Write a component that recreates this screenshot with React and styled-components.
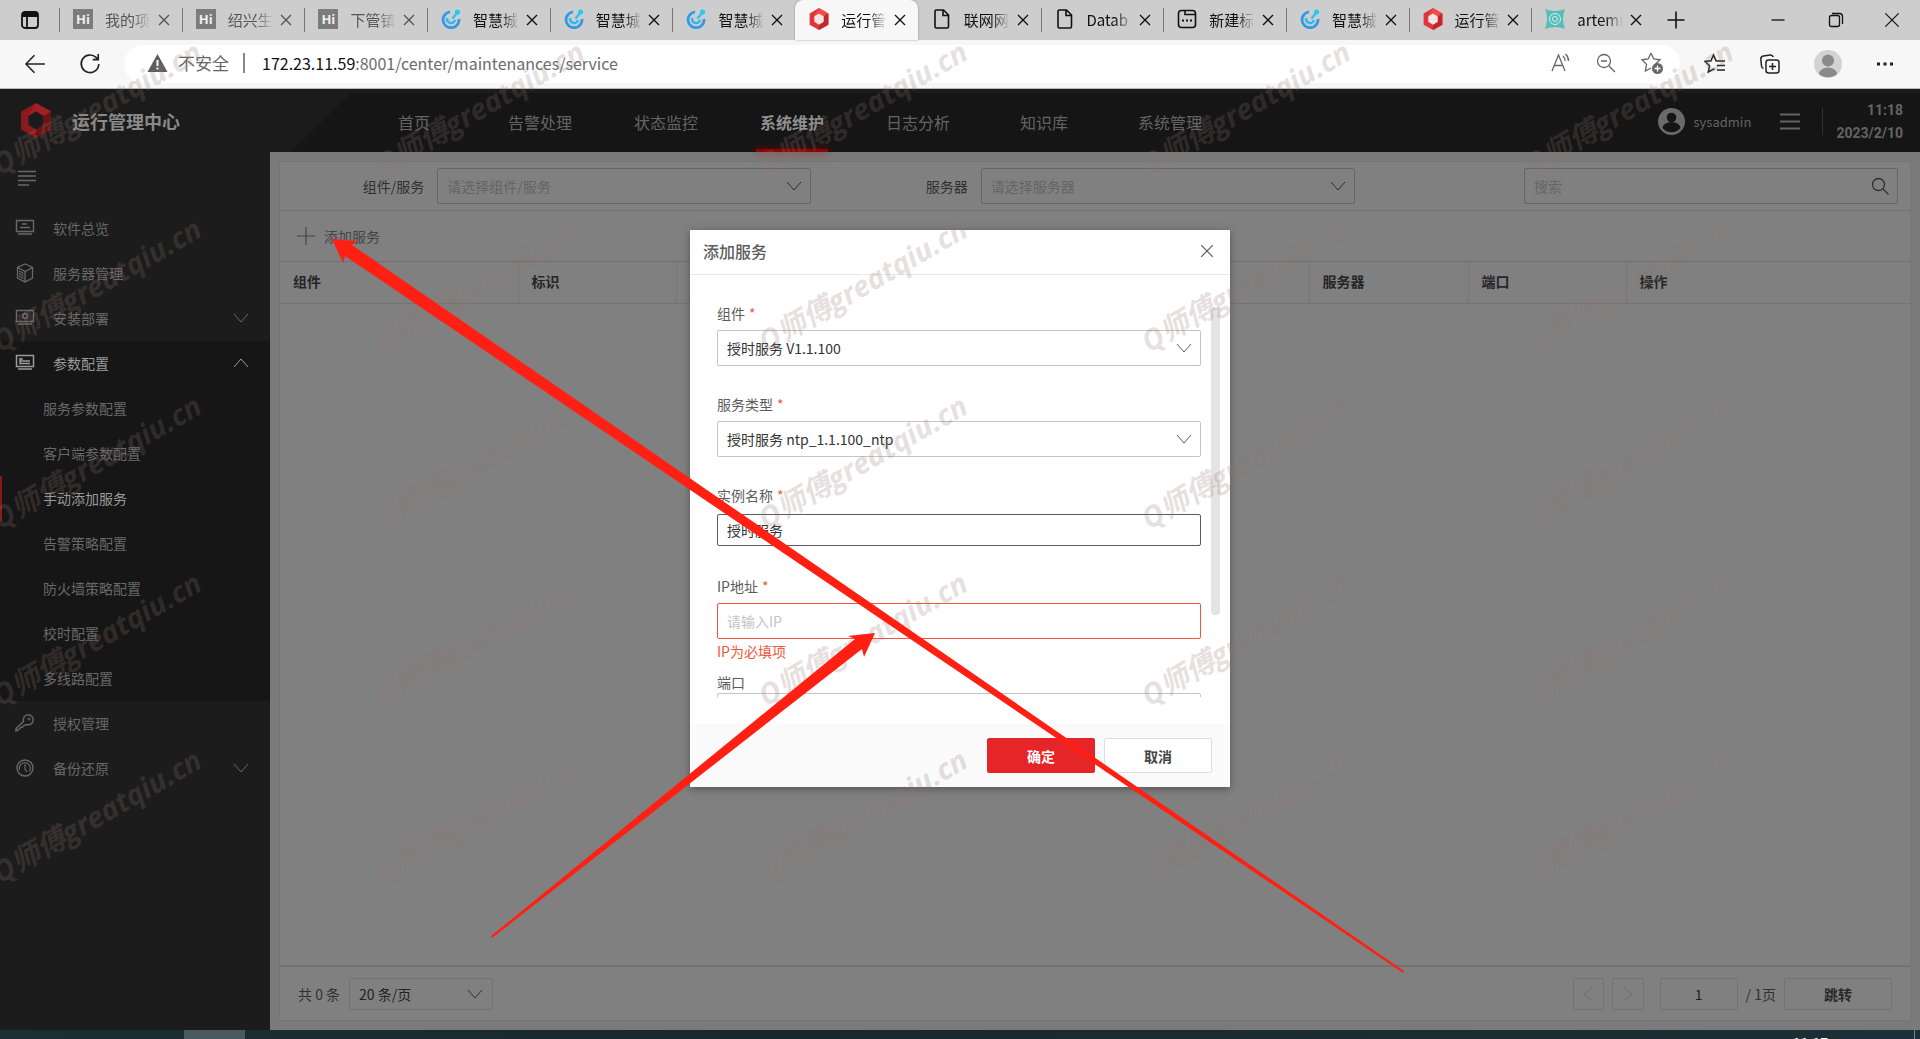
// App.jsx
import React from "react";
import styled, { createGlobalStyle, css } from "styled-components";

const GlobalStyle = createGlobalStyle`
  * {
    box-sizing: border-box;
  }

  body {
    margin: 0;
    font-family: "Noto Sans CJK SC", "Open Sans", sans-serif;
    font-size: 14px;
    overflow: hidden;
  }

  button, input, select {
    font-family: inherit;
    font-size: inherit;
    margin: 0;
  }

  a {
    text-decoration: none;
    color: inherit;
  }
`;

const Screen = styled.div`
  position: relative;
  display: flex;
  flex-direction: column;
  min-height: 100vh;
  overflow: hidden;
`;

const PlainButton = styled.button`
  display: inline-flex;
  align-items: center;
  justify-content: center;
  padding: 0;
  border: 0;
  background: none;
  color: inherit;
`;

/* ---------- browser ---------- */

const TabStrip = styled.div`
  display: flex;
  height: 40px;
  background: #cdcdcd;
  color: #111;
`;

const TabActions = styled(PlainButton)`
  width: 59px;
`;

const TabList = styled.div`
  display: flex;
  flex: 1;
  min-width: 0;
`;

const Tab = styled.div`
  position: relative;
  display: flex;
  flex: 1;
  align-items: center;
  min-width: 0;
  padding: 0 12px 0 14px;
  font-size: 15px;
  color: ${({ $muted }) => ($muted ? "#555" : "#111")};

  &::before {
    content: "";
    position: absolute;
    left: 0;
    top: 8px;
    height: 24px;
    border-left: 1px solid ${({ $plain }) => ($plain ? "transparent" : "#777")};
  }

  ${({ $active }) =>
    $active &&
    css`
      background: #f7f7f7;
      border-radius: 8px 8px 0 0;
      box-shadow: 0 0 2px rgba(0, 0, 0, 0.4);
    `}
`;

const TabTitle = styled.button`
  display: flex;
  flex: 1;
  align-items: center;
  gap: 12px;
  min-width: 0;
  height: 100%;
  padding: 0 0 2px;
  border: 0;
  background: none;
  color: inherit;
  font-size: 15px;

  svg {
    flex: none;
  }
`;

const TabText = styled.span`
  flex: none;
  width: 46px;
  white-space: nowrap;
  text-align: left;
  mask-image: linear-gradient(to right, #000 60%, transparent);
`;

const HiBadge = styled.span`
  flex: none;
  width: 20px;
  height: 20px;
  background: #7b7b7b;
  color: #eee;
  font: bold 13px/20px "Open Sans", sans-serif;
`;

const WindowControls = styled.div`
  display: flex;
  justify-content: space-between;
  width: 266px;
  padding: 0 20px 0 12px;
`;

const WindowGroup = styled.div`
  display: flex;
  gap: 38px;
`;

const AddressRow = styled.div`
  display: flex;
  align-items: center;
  height: 49px;
  padding: 0 24px;
  background: #f7f7f7;
  border-bottom: 1px solid #bbb;
  color: #222;
`;

const NavButtons = styled.div`
  display: flex;
  gap: 33px;
  width: 100px;
`;

const AddressBar = styled.div`
  display: flex;
  align-items: center;
  flex: 1;
  height: 38px;
  padding: 0 16px 2px 23px;
  border-radius: 19px;
  background: #fff;
  color: #666;
  font-size: 17px;
`;

const Unsafe = styled.span`
  margin-left: 10px;
  padding-right: 14px;
  border-right: 2px solid #888;
  line-height: 20px;
`;

const Url = styled.span`
  flex: 1;
  padding-left: 17px;
  font-size: 16px;
  color: #6b6b6b;

  b {
    font-weight: 400;
    color: #111;
  }
`;

const IconGroup = styled.div`
  display: flex;
  align-items: center;
  gap: ${({ $gap }) => $gap}px;
`;

const BrowserIcons = styled(IconGroup)`
  width: 216px;
  padding-left: 24px;
`;

/* ---------- page header ---------- */

const Page = styled.div`
  display: flex;
  flex-direction: column;
  flex: 1;
`;

const Header = styled.header`
  position: relative;
  display: flex;
  height: 63px;
  background: #151515;
  border-top: 4px solid #1c1c1c;
  color: #646464;
`;

const Brand = styled.div`
  display: flex;
  align-items: center;
  gap: 20px;
  width: 351px;
  padding: 0 0 4px 20px;
  background: #1b1b1b;
  clip-path: polygon(0 0, 100% 0, 83% 100%, 0 100%);
  color: #8a8a8a;
  font-size: 18px;
  font-weight: 700;
`;

const MainNav = styled.nav`
  display: flex;
  flex: 1;
`;

const NavLink = styled.a`
  position: relative;
  width: 126px;
  line-height: 58px;
  text-align: center;
  font-size: 16px;

  ${({ $active }) =>
    $active &&
    css`
      color: #909090;
      font-weight: 700;

      &::after {
        content: "";
        position: absolute;
        left: 27px;
        right: 27px;
        bottom: 0;
        height: 3px;
        background: #8a0406;
        box-shadow: 0 0 8px rgba(170, 0, 0, 0.7);
      }
    `}
`;

const UserArea = styled.div`
  display: flex;
  align-items: center;
  padding: 0 17px 2px 0;
`;

const UserName = styled.span`
  padding: 0 29px 0 9px;
  font-size: 13px;
`;

const Clock = styled.div`
  margin-left: 22px;
  padding-left: 14px;
  background: linear-gradient(#333, #333) left center / 1px 27px no-repeat;
  font: bold 14px/23px Roboto, sans-serif;
  text-align: right;
`;

/* ---------- sidebar ---------- */

const Content = styled.div`
  display: flex;
  flex: 1;
`;

const Sidebar = styled.aside`
  width: 270px;
  background: #1c1c1c;
  color: #686868;
`;

const Collapse = styled(PlainButton)`
  width: 100%;
  height: 54px;
  padding: 0 18px 2px;
  justify-content: flex-start;
  align-items: center;
`;

const MenuGroup = styled.div`
  background: ${({ $open }) => ($open ? "#161616" : "transparent")};
`;

const MenuItem = styled.button`
  display: flex;
  align-items: center;
  width: 100%;
  height: 45px;
  padding: 0 21px 2px 15px;
  border: 0;
  background: none;
  color: ${({ $active }) => ($active ? "#9a9a9a" : "inherit")};
  text-align: left;
`;

const MenuText = styled.span`
  flex: 1;
  padding-left: 18px;
`;

const SubLink = styled.a`
  display: block;
  height: 45px;
  padding-left: 41px;
  border-left: 2px solid ${({ $active }) => ($active ? "#8c1719" : "transparent")};
  line-height: 45px;
  color: ${({ $active }) => ($active ? "#9a9a9a" : "inherit")};
`;

/* ---------- service list ---------- */

const Main = styled.main`
  display: flex;
  flex: 1;
  padding: 9px 9px;
  background: #7a7a7a;
`;

const Card = styled.section`
  display: flex;
  flex-direction: column;
  flex: 1;
  background: #808080;
  border: 1px solid #757575;
  color: #303030;
`;

const Filters = styled.div`
  display: grid;
  grid-template-columns: repeat(3, 1fr);
  align-items: center;
  height: 49px;
  border-bottom: 1px solid #707070;
`;

const FilterCell = styled.div`
  display: flex;
  align-items: center;
  justify-content: flex-end;
  gap: 13px;
  padding-right: 12px;
`;

const ControlBox = styled.div`
  position: relative;
  width: ${({ $width }) => $width || "100%"};

  svg {
    position: absolute;
    right: ${({ $inset }) => $inset || 9}px;
    top: 50%;
    transform: translateY(-50%);
    pointer-events: none;
  }
`;

const control = css`
  display: block;
  width: 100%;
  height: ${({ $height }) => $height || 36}px;
  padding: 0 9px;
  border: 1px solid ${({ $line }) => $line || "#666"};
  border-radius: 2px;
  outline: none;
  background: transparent;
  color: ${({ $ink }) => $ink || "#646464"};
  text-align: ${({ $align }) => $align || "left"};

  &::placeholder {
    color: ${({ $hint }) => $hint || "#666"};
    opacity: 1;
  }
`;

const Select = styled.select`
  ${control}
  appearance: none;
`;

const Input = styled.input`
  ${control}
`;

const Toolbar = styled.div`
  display: flex;
  align-items: center;
  height: 51px;
  padding-left: 17px;
  border-bottom: 1px solid #707070;
`;

const AddButton = styled(PlainButton)`
  gap: 9px;
  color: #454545;
`;

const Table = styled.table`
  width: 100%;
  border-collapse: collapse;
  table-layout: fixed;
`;

const Th = styled.th`
  width: ${({ $width }) => $width};
  height: 41px;
  padding: 0 0 2px 13px;
  border-bottom: 1px solid #737373;
  border-right: 1px solid #767676;
  text-align: left;
  font-weight: 700;
  color: #262626;

  &:last-child {
    border-right: 0;
  }
`;

const Pager = styled.div`
  display: flex;
  align-items: center;
  height: 55px;
  margin-top: auto;
  padding: 0 18px;
  border-top: 2px solid #727272;
`;

const Total = styled.span`
  width: 51px;
  white-space: nowrap;
`;

const PagerRight = styled.div`
  display: flex;
  align-items: center;
  gap: 8px;
  margin-left: auto;
`;

const OutlineButton = styled.button`
  display: inline-flex;
  align-items: center;
  justify-content: center;
  width: ${({ $width }) => $width}px;
  height: 32px;
  padding: 0;
  border: 1px solid #727272;
  border-radius: 2px;
  background: transparent;
  color: ${({ $faint }) => ($faint ? "#6c6c6c" : "#2a2a2a")};
  font-weight: 700;
`;

const PageBox = styled.div`
  width: 78px;
  margin-left: 8px;
`;

/* ---------- dialog ---------- */

const Overlay = styled.div`
  position: absolute;
  inset: 230px 0 auto;
  display: flex;
  justify-content: center;
`;

const Dialog = styled.section`
  width: 540px;
  background: #fff;
  box-shadow: 0 2px 8px rgba(0, 0, 0, 0.35);
  color: #5c5c5c;
`;

const DialogHead = styled.div`
  display: flex;
  align-items: center;
  justify-content: space-between;
  height: 45px;
  padding: 0 16px 2px 13px;
  border-bottom: 1px solid #e8e8e8;
`;

const DialogTitle = styled.h2`
  margin: 0;
  font-size: 16px;
  font-weight: 500;
`;

const DialogBody = styled.div`
  position: relative;
  height: 422px;
  margin-bottom: 27px;
  padding: 27px 29px 0 27px;
  overflow: hidden;
`;

const ScrollThumb = styled.div`
  position: absolute;
  right: 10px;
  top: 32px;
  width: 9px;
  height: 308px;
  border-radius: 4px;
  background: #e4e4e4;
`;

const Field = styled.div`
  min-height: ${({ $tight }) => ($tight ? 0 : 91)}px;
`;

const Label = styled.label`
  display: block;
  height: ${({ $tight }) => ($tight ? 20 : 28)}px;
  line-height: ${({ $tight }) => ($tight ? 18 : 22)}px;

  i {
    margin-left: 4px;
    color: #f0583e;
    font-style: normal;
  }
`;

const Centered = styled.div`
  display: flex;
  align-items: center;
  height: 36px;
`;

const ErrorText = styled.div`
  height: 34px;
  line-height: 24px;
  color: #f0583e;
`;

const DialogFoot = styled.div`
  display: flex;
  justify-content: flex-end;
  gap: 9px;
  padding: 14px 18px;
  background: #fafafa;
`;

const DialogButton = styled.button`
  width: 108px;
  height: 35px;
  border: 1px solid ${({ $primary }) => ($primary ? "#e62529" : "#dedede")};
  border-radius: 2px;
  background: ${({ $primary }) => ($primary ? "#e62529" : "#fff")};
  color: ${({ $primary }) => ($primary ? "#fff" : "#444")};
  font-weight: 700;
`;

/* ---------- taskbar and overlays ---------- */

const Taskbar = styled.footer`
  display: flex;
  justify-content: space-between;
  height: 9px;
  padding: 0 5px 0 184px;
  overflow: hidden;
  background: linear-gradient(to right, #1b2f35, #19282d 40%, #1c2f36);
`;

const RunningApp = styled.div`
  width: 61px;
  background: #4a595f;
`;

const TaskClock = styled.div`
  height: 9px;
  padding: 2px 86px 0 0;
  border-right: 1px solid #77858a;
  color: #fff;
  font-size: 14px;
  line-height: 20px;
`;

const Layer = styled.svg`
  position: absolute;
  left: 0;
  top: 0;
  pointer-events: none;
`;

const Mark = styled.text`
  font: italic 700 29px "Open Sans", "Noto Sans CJK SC", sans-serif;
  fill: #8f7571;
  fill-opacity: 0.24;
`;

/* ---------- icons ---------- */

function Icon({ size = 20, box = 20, stroke = 1, children }) {
  return (
    <svg
      width={size}
      height={size}
      viewBox={`0 0 ${box} ${box}`}
      fill="none"
      stroke="currentColor"
      strokeWidth={stroke}
    >
      {children}
    </svg>
  );
}

const Chevron = ({ up, size = 16 }) => (
  <Icon size={size} box={16}>
    <path d={up ? "M1 12l7-8 7 8" : "M1 4l7 8 7-8"} />
  </Icon>
);

const Cross = ({ size = 12, stroke = 1 }) => (
  <Icon size={size} box={12} stroke={stroke}>
    <path d="M1 1l10 10M11 1L1 11" />
  </Icon>
);

const Swirl = () => (
  <svg width="20" height="20" viewBox="0 0 20 20" fill="none">
    <path d="M9 2.800A8 8 0 1 0 18 10" stroke="#2e9be8" strokeWidth="2.800" />
    <path d="M6.200 9a4 4 0 1 0 7.800 2" stroke="#28b7ee" strokeWidth="2.400" />
    <path d="M11.500 9.500l4.500-5.500" stroke="#29c4f2" strokeWidth="2.500" />
    <circle cx="16.500" cy="3" r="2.600" fill="#29c9f3" />
  </svg>
);

const HexLogo = ({ width = 20, dim }) => (
  <svg width={width} height={width * 1.1} viewBox="0 0 32 35">
    <path d="M16 0l15 8.500v18L16 35 1 26.500v-18z" fill={dim ? "#8a1a1d" : "#e0353a"} />
    <path d="M16 0l15 8.500-7 4.500-8-5-8 5z" fill={dim ? "#a02024" : "#f04a4c"} />
    <path d="M31 8.500v18L16 35l0-8 8-5V13z" fill={dim ? "#6c1316" : "#c4262c"} />
    <path
      d="M16 8.500l7.500 4.500v9L16 26.500 8.500 22v-9z"
      fill={dim ? "#1b1b1b" : "#f3e4e4"}
    />
  </svg>
);

const PageIcon = () => (
  <Icon stroke={1.6}>
    <path d="M4.500 1h7l5 5v11.500a1.500 1.500 0 0 1-1.500 1.500H4.500A1.500 1.500 0 0 1 3 17.500v-15A1.500 1.500 0 0 1 4.500 1zM11 1v5.500h5.500" />
  </Icon>
);

const NewTabIcon = () => (
  <Icon stroke={1.6}>
    <rect x="1.500" y="1.500" width="17" height="17" rx="3" />
    <path d="M8 1.500v4h10.500" />
    <path d="M5 11.500h2M9 11.500h2M13 11.500h2" strokeWidth="2" />
  </Icon>
);

const TealIcon = () => (
  <svg width="20" height="20" viewBox="0 0 20 20" fill="none" stroke="#d6efec">
    <path d="M0 0q10 4 20 0-4 10 0 20-10-4-20 0 4-10 0-20z" fill="#58bcb8" stroke="none" />
    <circle cx="10" cy="10" r="5.500" />
    <circle cx="10" cy="10" r="2.500" />
  </svg>
);

const tabIcons = {
  hi: <HiBadge>Hi</HiBadge>,
  swirl: <Swirl />,
  hex: <HexLogo width={20} />,
  page: <PageIcon />,
  blank: <NewTabIcon />,
  teal: <TealIcon />,
};

const menuIcons = {
  overview: (
    <Icon>
      <path d="M1.500 2.500h17v11h-17zM3 16h14M7 6h5M5 9.500h10" strokeWidth="1.400" />
    </Icon>
  ),
  server: (
    <Icon>
      <path d="M10 1l7.500 3.500v10.500L10 19l-7.500-4V4.500zM2.500 4.500L10 8.500l7.500-4M10 8.500V19M4 8l4.500 2.500M4 10.500L8.500 13M4 13l4.500 2.500" strokeWidth="1.300" />
    </Icon>
  ),
  deploy: (
    <Icon>
      <path d="M1.500 2.500h17v11h-17zM3 16h14" strokeWidth="1.400" />
      <circle cx="10" cy="8" r="2" strokeWidth="1.500" />
      <path d="M10 4.200v1.600M10 10.200v1.600M6.200 8h1.600M12.200 8h1.600M7.300 5.300l1.200 1.200M11.500 9.500l1.200 1.200M12.700 5.300l-1.200 1.200M8.500 9.500l-1.200 1.200" strokeWidth="1.200" />
    </Icon>
  ),
  params: (
    <Icon>
      <path d="M1.500 2.500h17v11h-17zM3 16h14" strokeWidth="1.500" />
      <path d="M5 5v5.500h10M5 8h10M5 6h3" strokeWidth="1.500" />
    </Icon>
  ),
  key: (
    <Icon>
      <path d="M8.500 8.500a5 5 0 1 1 3 3L9 12.500 7.500 14l-2 .500-1.500 2L1 18v-2.500z" strokeWidth="1.400" />
      <circle cx="14" cy="6" r="1" />
    </Icon>
  ),
  backup: (
    <Icon>
      <circle cx="10" cy="10" r="8" strokeWidth="1.400" />
      <path d="M4.500 12a6 6 0 0 1 5-7.500 6 6 0 0 1 5 9M10 6v5l2 3" strokeWidth="1.200" />
    </Icon>
  ),
};

/* ---------- data ---------- */

const tabs = [
  { icon: "hi", title: "我的项", muted: true },
  { icon: "hi", title: "绍兴生", muted: true },
  { icon: "hi", title: "下管镇", muted: true },
  { icon: "swirl", title: "智慧城" },
  { icon: "swirl", title: "智慧城" },
  { icon: "swirl", title: "智慧城" },
  { icon: "hex", title: "运行管", active: true },
  { icon: "page", title: "联网网", plain: true },
  { icon: "page", title: "Datab" },
  { icon: "blank", title: "新建标" },
  { icon: "swirl", title: "智慧城" },
  { icon: "hex", title: "运行管" },
  { icon: "teal", title: "artemi" },
];

const navItems = ["首页", "告警处理", "状态监控", "系统维护", "日志分析", "知识库", "系统管理"];

const menu = [
  { icon: "overview", text: "软件总览" },
  { icon: "server", text: "服务器管理" },
  { icon: "deploy", text: "安装部署", arrow: true },
  {
    icon: "params",
    text: "参数配置",
    arrow: true,
    children: [
      "服务参数配置",
      "客户端参数配置",
      "手动添加服务",
      "告警策略配置",
      "防火墙策略配置",
      "校时配置",
      "多线路配置",
    ],
  },
  { icon: "key", text: "授权管理" },
  { icon: "backup", text: "备份还原", arrow: true },
];

const markColumns = [0, 383, 766, 1149, 1532];
const markRows = [176, 353, 530, 707, 884];

/* ---------- parts ---------- */

function Browser() {
  return (
    <>
      <TabStrip>
        <TabActions aria-label="标签操作">
          <Icon stroke={1.8}>
            <rect x="2" y="2" width="16" height="16" rx="3" />
            <path d="M2 4.500h16" strokeWidth="5" />
            <path d="M7 5v13" />
          </Icon>
        </TabActions>
        <TabList>
          {tabs.map((tab, i) => (
            <Tab key={i} $muted={tab.muted} $active={tab.active} $plain={tab.plain || tab.active}>
              <TabTitle>
                {tabIcons[tab.icon]}
                <TabText>{tab.title}</TabText>
              </TabTitle>
              <PlainButton aria-label="关闭标签">
                <Cross stroke={1.4} />
              </PlainButton>
            </Tab>
          ))}
        </TabList>
        <WindowControls>
          <PlainButton aria-label="新建标签页">
            <Icon stroke={1.6}>
              <path d="M10 1.500v17M1.500 10h17" />
            </Icon>
          </PlainButton>
          <WindowGroup>
            <PlainButton aria-label="最小化">
              <Icon stroke={1.3}>
                <path d="M3.500 10h13" />
              </Icon>
            </PlainButton>
            <PlainButton aria-label="还原">
              <Icon stroke={1.3}>
                <rect x="3.500" y="5.500" width="10" height="11" rx="2" />
                <path d="M6 3.500h7.500a3 3 0 0 1 3 3V14" />
              </Icon>
            </PlainButton>
            <PlainButton aria-label="关闭">
              <Cross size={16} stroke={0.9} />
            </PlainButton>
          </WindowGroup>
        </WindowControls>
      </TabStrip>

      <AddressRow>
        <NavButtons>
          <PlainButton aria-label="返回">
            <Icon size={22} stroke={1.4}>
              <path d="M19 10H2M9.500 2L1.800 10l7.700 8" />
            </Icon>
          </PlainButton>
          <PlainButton aria-label="刷新">
            <Icon size={22} stroke={1.5}>
              <path d="M18 10a8 8 0 1 1-2.500-6l1.500 2M17.500 1v5h-5" />
            </Icon>
          </PlainButton>
        </NavButtons>
        <AddressBar>
          <svg width="21" height="20" viewBox="0 0 21 20">
            <path d="M10.500 1l10 18H.500z" fill="#5e5e5e" />
            <path d="M10.500 7v6M10.500 14.500v2" stroke="#fff" strokeWidth="2" />
          </svg>
          <Unsafe>不安全</Unsafe>
          <Url>
            <b>172.23.11.59</b>:8001/center/maintenances/service
          </Url>
          <IconGroup $gap={23}>
            <PlainButton aria-label="朗读">
              <Icon size={22} box={22} stroke={1.3}>
                <path d="M2 19L8.500 3 15 19M4.300 13.500h8.400M13 4a6 6 0 0 1 2 5M15.500 2a9 9 0 0 1 3 7" />
              </Icon>
            </PlainButton>
            <PlainButton aria-label="缩小">
              <Icon size={22} box={22} stroke={1.3}>
                <circle cx="9" cy="9" r="6.500" />
                <path d="M6 9h6M14 14l6 6" />
              </Icon>
            </PlainButton>
            <PlainButton aria-label="收藏">
              <Icon size={24} box={24} stroke={1.3}>
                <path d="M11 2l2.800 6 6.200.800-4.600 4.400M11 2L8.200 8 2 8.800l4.500 4.600L5.400 20l5.600-3" />
                <circle cx="17.500" cy="17.500" r="5.500" fill="#666" stroke="none" />
                <path d="M17.500 14.500v6M14.500 17.500h6" stroke="#fff" />
              </Icon>
            </PlainButton>
          </IconGroup>
        </AddressBar>
        <BrowserIcons $gap={33}>
          <PlainButton aria-label="收藏夹">
            <Icon size={22} box={22} stroke={1.5}>
              <path d="M14 8l-2-.200L9.500 2 7 7.800l-6 .700 4.500 4.300L4.300 19l5.200-3 1 .600M13 8h8M13 12.500h8M13 17h8" />
            </Icon>
          </PlainButton>
          <PlainButton aria-label="集锦">
            <Icon size={22} box={22} stroke={1.5}>
              <rect x="7" y="7" width="13" height="13" rx="2.500" />
              <path d="M13.500 10v7M10 13.500h7M4.500 15.500A3 3 0 0 1 2.500 13L1.800 6a3 3 0 0 1 2.500-3l7-1a3 3 0 0 1 3 2" />
            </Icon>
          </PlainButton>
          <PlainButton aria-label="个人资料">
            <svg width="28" height="28" viewBox="0 0 28 28">
              <circle cx="14" cy="14" r="14" fill="#d3d3d3" />
              <circle cx="14" cy="10.500" r="6" fill="#8a8a8a" />
              <path d="M5 24a9 6.500 0 0 1 18 0 14 14 0 0 1-18 0z" fill="#8a8a8a" />
            </svg>
          </PlainButton>
          <PlainButton aria-label="更多">
            <Icon>
              <path d="M2 10h3M8.500 10h3M15 10h3" strokeWidth="3" />
            </Icon>
          </PlainButton>
        </BrowserIcons>
      </AddressRow>
    </>
  );
}

function PageHeader() {
  return (
    <Header>
      <Brand>
        <HexLogo width={32} dim />
        运行管理中心
      </Brand>
      <MainNav>
        {navItems.map((item) => (
          <NavLink key={item} href="#" $active={item === "系统维护"}>
            {item}
          </NavLink>
        ))}
      </MainNav>
      <UserArea>
        <svg width="27" height="27" viewBox="0 0 27 27">
          <circle cx="13.500" cy="13.500" r="13.500" fill="#6a6a6a" />
          <circle cx="13.500" cy="9.500" r="4.800" fill="#151515" />
          <path d="M4.500 20a9 6 0 0 1 18 0 11.500 11.500 0 0 1-18 0z" fill="#151515" />
        </svg>
        <UserName>sysadmin</UserName>
        <PlainButton aria-label="菜单">
          <Icon stroke={1.8}>
            <path d="M0 2.500h20M0 9.500h20M0 16.500h20" />
          </Icon>
        </PlainButton>
        <Clock>
          11:18
          <br />
          2023/2/10
        </Clock>
      </UserArea>
    </Header>
  );
}

function SideMenu() {
  return (
    <Sidebar>
      <Collapse aria-label="收起菜单">
        <Icon size={18} box={18} stroke={1.5}>
          <path d="M0 2.500h18M0 7h18M0 11.500h18M0 16h11" />
        </Icon>
      </Collapse>
      {menu.map((group) => (
        <MenuGroup key={group.text} $open={group.children}>
          <MenuItem $active={group.children}>
            {menuIcons[group.icon]}
            <MenuText>{group.text}</MenuText>
            {group.arrow && <Chevron up={group.children} />}
          </MenuItem>
          {group.children &&
            group.children.map((text) => (
              <SubLink key={text} href="#" $active={text === "手动添加服务"}>
                {text}
              </SubLink>
            ))}
        </MenuGroup>
      ))}
    </Sidebar>
  );
}

function ServiceList() {
  return (
    <Main>
      <Card>
        <Filters>
          <FilterCell>
            <label htmlFor="component">组件/服务</label>
            <ControlBox $width="374px">
              <Select id="component">
                <option>请选择组件/服务</option>
              </Select>
              <Chevron />
            </ControlBox>
          </FilterCell>
          <FilterCell>
            <label htmlFor="server">服务器</label>
            <ControlBox $width="374px">
              <Select id="server">
                <option>请选择服务器</option>
              </Select>
              <Chevron />
            </ControlBox>
          </FilterCell>
          <FilterCell>
            <ControlBox $width="374px">
              <Input aria-label="搜索" placeholder="搜索" />
              <Icon size={18} box={18} stroke={1.3}>
                <circle cx="7.500" cy="7.500" r="6" />
                <path d="M12 12l5.500 5.500" />
              </Icon>
            </ControlBox>
          </FilterCell>
        </Filters>
        <Toolbar>
          <AddButton>
            <Icon size={18} box={18} stroke={1.2}>
              <path d="M9 0v18M0 9h18" />
            </Icon>
            添加服务
          </AddButton>
        </Toolbar>
        <Table>
          <thead>
            <tr>
              <Th $width="238px">组件</Th>
              <Th $width="158px">标识</Th>
              <Th />
              <Th $width="159px">服务器</Th>
              <Th $width="158px">端口</Th>
              <Th $width="284px">操作</Th>
            </tr>
          </thead>
        </Table>
        <Pager>
          <Total>共 0 条</Total>
          <ControlBox $width="144px" $inset={10}>
            <Select aria-label="每页条数" $height={32} $line="#727272" $ink="#222">
              <option>20 条/页</option>
            </Select>
            <Chevron />
          </ControlBox>
          <PagerRight>
            <OutlineButton $width={31} $faint aria-label="上一页">
              <Icon size={16} box={16}>
                <path d="M12 1L4 8l8 7" />
              </Icon>
            </OutlineButton>
            <OutlineButton $width={32} $faint aria-label="下一页">
              <Icon size={16} box={16}>
                <path d="M4 1l8 7-8 7" />
              </Icon>
            </OutlineButton>
            <PageBox>
              <Input aria-label="页码" defaultValue="1" $height={32} $line="#727272" $ink="#222" $align="center" />
            </PageBox>
            <span>/ 1页</span>
            <OutlineButton $width={108}>跳转</OutlineButton>
          </PagerRight>
        </Pager>
      </Card>
    </Main>
  );
}

function AddServiceDialog() {
  return (
    <Overlay>
      <Dialog role="dialog" aria-labelledby="dialog-title">
        <DialogHead>
          <DialogTitle id="dialog-title">添加服务</DialogTitle>
          <PlainButton aria-label="关闭">
            <Cross size={14} />
          </PlainButton>
        </DialogHead>
        <DialogBody>
          <Field>
            <Label htmlFor="f-component">
              组件<i>*</i>
            </Label>
            <ControlBox>
              <Select id="f-component" $line="#c4c4c4" $ink="#333">
                <option>授时服务 V1.1.100</option>
              </Select>
              <Chevron />
            </ControlBox>
          </Field>
          <Field>
            <Label htmlFor="f-type">
              服务类型<i>*</i>
            </Label>
            <ControlBox>
              <Select id="f-type" $line="#c4c4c4" $ink="#333">
                <option>授时服务 ntp_1.1.100_ntp</option>
              </Select>
              <Chevron />
            </ControlBox>
          </Field>
          <Field>
            <Label htmlFor="f-name">
              实例名称<i>*</i>
            </Label>
            <Centered>
              <Input id="f-name" defaultValue="授时服务" $height={32} $line="#5c5c5c" $ink="#333" />
            </Centered>
          </Field>
          <Field $tight>
            <Label htmlFor="f-ip">
              IP地址<i>*</i>
            </Label>
            <Input id="f-ip" placeholder="请输入IP" $line="#f0583e" $hint="#c4c4c4" />
            <ErrorText>IP为必填项</ErrorText>
          </Field>
          <Field $tight>
            <Label htmlFor="f-port" $tight>
              端口
            </Label>
            <Input id="f-port" $line="#c4c4c4" />
          </Field>
          <ScrollThumb />
        </DialogBody>
        <DialogFoot>
          <DialogButton $primary>确定</DialogButton>
          <DialogButton>取消</DialogButton>
        </DialogFoot>
      </Dialog>
    </Overlay>
  );
}

export default function App() {
  return (
    <Screen>
      <GlobalStyle />
      <Browser />
      <Page>
        <PageHeader />
        <Content>
          <SideMenu />
          <ServiceList />
        </Content>
      </Page>
      <Taskbar>
        <RunningApp />
        <TaskClock>11:17</TaskClock>
      </Taskbar>
      <AddServiceDialog />

      <Layer width="1920" height="1039">
        {markRows.map((y) =>
          markColumns.map((x) => (
            <Mark key={`${x}-${y}`} transform={`translate(${x} ${y}) rotate(-30)`}>
              Q师傅greatqiu.cn
            </Mark>
          ))
        )}
      </Layer>
      <Layer width="1920" height="1039" fill="#ff2013">
        <path d="M332 239l25 2-5 4L1404 971l-1 2L345 256l-2 7z" />
        <path d="M875 633l-27 3 7 3L491 936l1 2L862 649l2 8z" />
      </Layer>
    </Screen>
  );
}
